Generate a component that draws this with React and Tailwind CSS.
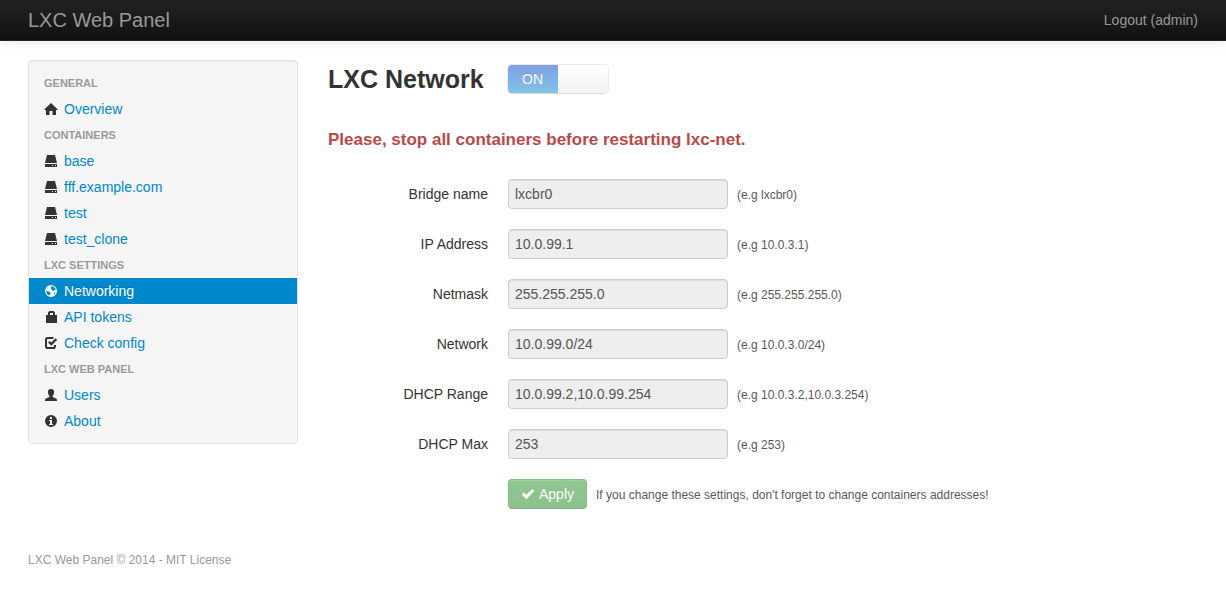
import React, { useState } from "react";

const paths = {
  home: "M7 1 L0.5 7.2 V8 H2 V13 H5.5 V9 H8.5 V13 H12 V8 H13.5 V7.2 Z",
  disk: "M3 1 H11 L13 9 H1 Z M1 10 H13 V13 H1 Z M8 11 V12 H9 V11 Z M11 11 V12 H12 V11 Z",
  globe:
    "M7 1 A6 6 0 1 0 7 13 A6 6 0 1 0 7 1 Z M6.6 2.2 L9.4 2.4 L11.4 4.4 L11.8 6 L10.2 5.8 L9.8 7 L8.4 6.8 L8 5.4 L6.6 5 L7.4 3.6 Z M2.2 6.4 L3.6 7.4 L5.4 7.6 L6.6 8.8 L6.2 10.4 L5.4 11.6 L3.8 10.8 L2.6 9.2 Z M10.4 8.4 L11.6 8.2 L10.8 9.8 L9.8 10.2 Z",
  lock: "M2 5 H4 V2.4 L5.4 1 H9.6 L11 2.4 V5 H13 V13 H2 Z M6 3 V5 H9 V3 Z",
  user: "M7 1 C9 1 10.2 2 10.1 4 C10 6 9.3 7.2 8.7 7.9 V9 L12 10.6 C12.8 11 13 11.5 13 13 H1 C1 11.5 1.2 11 2 10.6 L5.3 9 V7.9 C4.7 7.2 4 6 3.9 4 C3.8 2 5 1 7 1 Z",
  info: "M7 1 A6 6 0 1 0 7 13 A6 6 0 1 0 7 1 Z M6 3 H8 V5 H6 Z M5 6 H8 V10 H9 V11 H5 V10 H6 V7 H5 Z",
  check: "M0.7 7.6 L2.7 5.4 L5.3 7.8 L11.2 2 L13.3 4.1 L5.4 12.2 Z",
};

function Icon({ name }) {
  return (
    <svg viewBox="0 0 14 14" className="size-3.5 shrink-0" fill="currentColor" aria-hidden="true">
      {name === "task" ? (
        <>
          <path
            d="M9.5 2 H3.8 Q2 2 2 3.8 V10.2 Q2 12 3.8 12 H9.2 Q11 12 11 10.2 V9"
            fill="none"
            stroke="currentColor"
            strokeWidth="2"
          />
          <path d="M4 6.4 L5.5 5 L7.3 6.6 L11.6 2.2 L13.2 3.8 L7.3 9.8 Z" />
        </>
      ) : (
        <path fillRule="evenodd" d={paths[name]} />
      )}
    </svg>
  );
}

const sections = [
  { title: "General", items: [["home", "Overview"]] },
  {
    title: "Containers",
    items: [["disk", "base"], ["disk", "fff.example.com"], ["disk", "test"], ["disk", "test_clone"]],
  },
  {
    title: "LXC Settings",
    items: [["globe", "Networking"], ["lock", "API tokens"], ["task", "Check config"]],
  },
  { title: "LXC Web Panel", items: [["user", "Users"], ["info", "About"]] },
];

const fields = [
  ["bridge", "Bridge name", "lxcbr0", "(e.g lxcbr0)"],
  ["address", "IP Address", "10.0.99.1", "(e.g 10.0.3.1)"],
  ["netmask", "Netmask", "255.255.255.0", "(e.g 255.255.255.0)"],
  ["network", "Network", "10.0.99.0/24", "(e.g 10.0.3.0/24)"],
  ["range", "DHCP Range", "10.0.99.2,10.0.99.254", "(e.g 10.0.3.2,10.0.3.254)"],
  ["max", "DHCP Max", "253", "(e.g 253)"],
];

function Sidebar() {
  return (
    <nav
      aria-label="Main"
      className="w-[270px] shrink-0 rounded border border-[#e3e3e3] bg-[#f5f5f5] py-[9px] shadow-[inset_0_1px_1px_rgba(0,0,0,0.05)]"
    >
      {sections.map((section) => (
        <section key={section.title}>
          <h2 className="px-[15px] py-[3px] text-[11px] leading-5 font-bold text-[#999999] uppercase [text-shadow:0_1px_0_rgba(255,255,255,0.5)]">
            {section.title}
          </h2>
          <ul>
            {section.items.map(([icon, label]) => {
              const active = label === "Networking";
              return (
                <li key={label}>
                  <a
                    href="#"
                    aria-current={active ? "page" : undefined}
                    className={
                      active
                        ? "flex items-center gap-1.5 bg-[#0088cc] px-[15px] py-[3px] text-white [text-shadow:0_-1px_0_rgba(0,0,0,0.2)]"
                        : "flex items-center gap-1.5 px-[15px] py-[3px] text-[#0088cc] hover:bg-[#eeeeee]"
                    }
                  >
                    <span className={active ? "text-white" : "text-[#333333]"}>
                      <Icon name={icon} />
                    </span>
                    {label}
                  </a>
                </li>
              );
            })}
          </ul>
        </section>
      ))}
    </nav>
  );
}

function Toggle() {
  const [on, setOn] = useState(true);
  return (
    <label className="flex h-[30px] w-[102px] cursor-pointer overflow-hidden rounded-[5px] border border-[#ececec] border-b-[#dadada] text-center text-sm leading-7">
      <input
        type="checkbox"
        aria-label="LXC Network"
        className="sr-only"
        checked={on}
        onChange={(e) => setOn(e.target.checked)}
      />
      {on && (
        <span className="w-1/2 bg-linear-to-b from-[#809fe6] to-[#80c4e6] text-white [text-shadow:0_-1px_0_rgba(0,0,0,0.15)]">
          ON
        </span>
      )}
      <span className="w-1/2 bg-linear-to-b from-white to-[#f2f2f2]" />
      {!on && <span className="w-1/2 bg-[#eeeeee] text-[#333333]">OFF</span>}
    </label>
  );
}

export default function App() {
  return (
    <div className="bg-white font-['Liberation_Sans',Arial,sans-serif] text-sm leading-5 text-[#333333]">
      <header className="flex h-[41px] items-center justify-between border-b border-[#252525] bg-linear-to-b from-[#222222] to-[#111111] px-7 text-[#999999] shadow-[0_1px_10px_rgba(0,0,0,0.1)]">
        <a href="#" className="text-xl leading-5">LXC Web Panel</a>
        <a href="#">Logout (admin)</a>
      </header>

      <div className="flex items-start gap-[30px] px-7 pt-[19px]">
        <Sidebar />
        <main className="min-w-0 flex-1">
          <div className="flex items-center gap-[23px] pt-1">
            <h1 className="text-[25px] leading-[30px] font-bold">LXC Network</h1>
            <Toggle />
          </div>
          <p className="pt-9 text-[17px] leading-5 font-bold text-[#b94a48]">
            Please, stop all containers before restarting lxc-net.
          </p>

          <form className="flex flex-col gap-5 pt-[29px]" onSubmit={(e) => e.preventDefault()}>
            {fields.map(([id, label, value, hint]) => (
              <div key={id} className="flex items-center">
                <label htmlFor={id} className="w-40 shrink-0 text-right">{label}</label>
                <input
                  id={id}
                  type="text"
                  readOnly
                  defaultValue={value}
                  className="ml-5 h-[30px] w-[220px] rounded border border-[#cccccc] bg-[#eeeeee] px-1.5 text-[#555555] shadow-[inset_0_1px_1px_rgba(0,0,0,0.075)]"
                />
                <span className="pt-0.5 pl-[9px] text-[12px] text-[#595959]">{hint}</span>
              </div>
            ))}
            <div className="flex items-center pl-[180px]">
              <button
                type="submit"
                disabled
                className="flex h-[30px] items-center gap-1 rounded border border-[#86bd86] border-b-[#7fb17f] bg-linear-to-b from-[#91c891] to-[#8bc18b] px-3 text-white shadow-[inset_0_1px_0_rgba(255,255,255,0.1)] [text-shadow:0_-1px_0_rgba(0,0,0,0.1)]"
              >
                <Icon name="check" />
                Apply
              </button>
              <span className="pt-0.5 pl-[9px] text-[12px] text-[#595959]">
                If you change these settings, don't forget to change containers addresses!
              </span>
            </div>
          </form>
        </main>
      </div>

      <footer className="px-7 pt-[41px] pb-5 text-[12px] text-[#999999]">
        LXC Web Panel © 2014 - MIT License
      </footer>
    </div>
  );
}
